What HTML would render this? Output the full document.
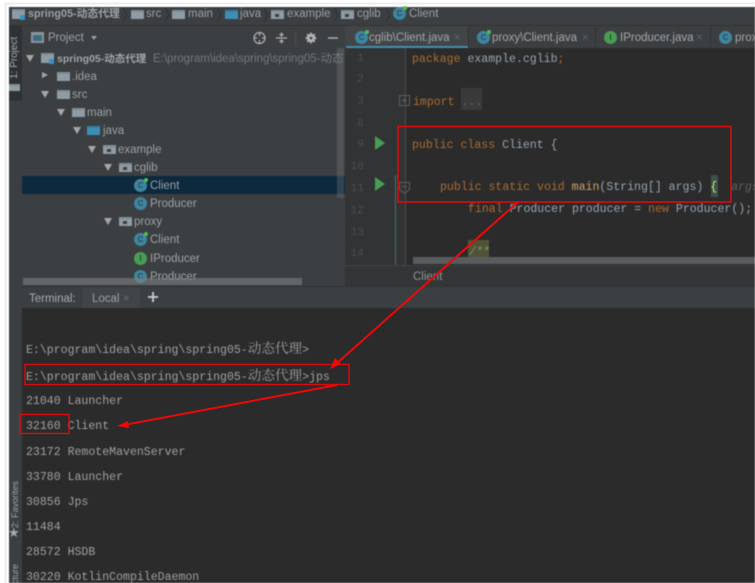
<!DOCTYPE html>
<html><head><meta charset="utf-8"><style>
html,body{margin:0;padding:0;background:#fff}
#a{position:relative;width:755px;height:583px;overflow:hidden;background:#fff}
#w{position:absolute;left:0;top:0;width:755px;height:583px;filter:blur(.6px)}
.b{position:absolute}
.t{position:absolute;white-space:pre;line-height:14px;height:14px;margin-top:1px;font-family:"Liberation Sans","Noto Sans CJK SC",sans-serif;font-size:11.5px;color:#9ba2a5}
.m{position:absolute;white-space:pre;line-height:14px;height:14px;margin-top:2px;font-family:"Liberation Mono","Noto Sans CJK SC",monospace;font-size:11.55px;color:#95a3b2}
.m u{text-decoration:none;font-size:13.6px;font-family:"Noto Serif CJK SC","Noto Sans CJK SC",serif;line-height:14px}
.n{position:absolute;white-space:pre;line-height:14px;margin-top:1px;font-family:"Liberation Mono",monospace;font-size:11px;color:#4b4f51;width:24px;left:344px}
.k{color:#a86b33}
.c{position:absolute;width:13px;height:13px;border-radius:50%;background:#3e86a0;color:#2f4a55;font:bold 8px/13px "Liberation Sans",sans-serif;text-align:center}
.g{background:#499c54;color:#2c4a30}
.d{position:absolute;width:4px;height:4px;background:#4fc14f;border-radius:50%;right:-1px;top:-1px}
.f{position:absolute;width:13px;height:9px;background:#8f9ca4;border-top:2px solid #808d95;box-sizing:border-box}
.fb{background:#3d8fb5;border-top-color:#3580a3}
.p:after{content:"";position:absolute;left:4px;top:2px;width:4px;height:3px;background:#3c3f41}
.ar{position:absolute;width:0;height:0;border-left:4px solid transparent;border-right:4px solid transparent;border-top:7px solid #a4a6a8}
.ar2{position:absolute;width:0;height:0;border-top:4px solid transparent;border-bottom:4px solid transparent;border-left:7px solid #a4a6a8}
.v{position:absolute;white-space:pre;font-family:"Liberation Sans",sans-serif;font-size:10px;line-height:12px;color:#9ba2a5;transform-origin:0 0;transform:rotate(-90deg)}
.term{color:#a0a0a0}
</style></head><body><div id="a"><div id="w">
<div class="b" style="left:5px;top:3px;width:750px;height:1px;background:#dcdcdc"></div>
<div class="b" style="left:5px;top:3px;width:1px;height:580px;background:#dcdcdc"></div>
<div class="b" style="left:9px;top:7px;width:746px;height:576px;background:#3c3f41"></div>

<!-- breadcrumb -->
<div class="f" style="left:12px;top:9px;width:13px;height:10px"></div><div class="b" style="left:20px;top:15px;width:5px;height:5px;background:#3592c4"></div>
<div class="t" style="left:28px;top:6px;font-weight:bold;font-size:10.8px">spring05-动态代理</div>
<svg class="b" style="left:0;top:7px" width="420" height="18" fill="none" stroke="#2e3032"><path d="M123 1l4 7-4 7M165 1l4 7-4 7M217 1l4 7-4 7M264 1l4 7-4 7M334 1l4 7-4 7M386 1l4 7-4 7"/></svg>
<div class="f" style="left:131px;top:10px"></div><div class="t" style="left:146px;top:6px">src</div>
<div class="f" style="left:172px;top:10px"></div><div class="t" style="left:188px;top:6px">main</div>
<div class="f fb" style="left:225px;top:10px"></div><div class="t" style="left:240px;top:6px">java</div>
<div class="f p" style="left:271px;top:10px"></div><div class="t" style="left:287px;top:6px">example</div>
<div class="f p" style="left:341px;top:10px"></div><div class="t" style="left:357px;top:6px">cglib</div>
<div class="c" style="left:393px;top:7px">C<i class="d"></i></div><div class="t" style="left:409px;top:6px">Client</div>
<div class="b" style="left:9px;top:25px;width:746px;height:1px;background:#323232"></div>

<!-- left strip -->
<div class="b" style="left:9px;top:26px;width:13px;height:75px;background:#2f3234"></div>
<div class="v" style="left:9px;top:79px;color:#a8abad;font-size:10px">1: Project</div>
<div class="f" style="left:9px;top:84px;width:11px;height:7px"></div>
<div class="v" style="left:9px;top:528px;font-size:9px">2: Favorites</div>
<div class="b" style="left:8px;top:527px;color:#a4abad;font:13px/14px 'DejaVu Sans',sans-serif">★</div>
<div class="v" style="left:9px;top:584px;font-size:9px">cture</div>

<!-- project panel -->
<div class="b" style="left:22px;top:26px;width:323px;height:22px;background:#3c3f41"></div>
<div class="b" style="left:31px;top:32px;width:13px;height:11px;background:#8a949a"></div>
<div class="b" style="left:33px;top:35px;width:9px;height:6px;background:#3f6a84"></div>
<div class="t" style="left:48px;top:30px;font-size:11.5px">Project</div>
<div class="ar" style="left:91px;top:36px;border-left-width:3.5px;border-right-width:3.5px;border-top-width:4px;border-top-color:#9a9fa2"></div>
<svg class="b" style="left:250px;top:28px" width="90" height="18" fill="none" stroke="#afb1b3" stroke-width="1.2">
<circle cx="9.5" cy="10" r="5.5"/><path d="M9.5 5v3M9.5 12v3M4 10h3M12 10h3"/>
<path d="M26 10h11M31.5 4.5v3M29.5 6l2 2 2-2M31.5 15.5v-3M29.5 14l2-2 2 2"/>
<path d="M45.5 3v15" stroke="#4a4d4f"/>
<circle cx="61" cy="10" r="3.2" stroke-width="2.4"/><path d="M61 4.5v11M55.5 10h11M57.1 6.1l7.800 7.800M64.900 6.100l-7.800 7.800" stroke-width="1.5"/><circle cx="61" cy="10" r="1.3" fill="#3c3f41" stroke="none"/>
<path d="M78 10h10" stroke-width="1.4"/>
</svg>

<div class="ar" style="left:26px;top:55px"></div>
<div class="f" style="left:41px;top:53px;width:13px;height:10px"></div><div class="b" style="left:49px;top:59px;width:5px;height:5px;background:#3592c4"></div>
<div class="t" style="left:57px;top:51px;font-weight:bold;font-size:10.5px;color:#a0a5a8">spring05-动态代理</div>
<div class="t" style="left:153px;top:51px;font-size:11.5px;color:#74787a;width:192px;overflow:hidden">E:\program\idea\spring\spring05-动态</div>

<div class="ar2" style="left:42px;top:72px;border-top-width:3.5px;border-bottom-width:3.5px;border-left-width:6px"></div>
<div class="f" style="left:57px;top:72px"></div><div class="t" style="left:72px;top:69px">.idea</div>
<div class="ar" style="left:41px;top:91px"></div>
<div class="f" style="left:57px;top:90px"></div><div class="t" style="left:72px;top:87px">src</div>
<div class="ar" style="left:57px;top:109px"></div>
<div class="f" style="left:72px;top:108px"></div><div class="t" style="left:87px;top:105px">main</div>
<div class="ar" style="left:73px;top:127px"></div>
<div class="f fb" style="left:87px;top:126px"></div><div class="t" style="left:103px;top:123px">java</div>
<div class="ar" style="left:88px;top:146px"></div>
<div class="f p" style="left:103px;top:145px"></div><div class="t" style="left:118px;top:142px">example</div>
<div class="ar" style="left:104px;top:164px"></div>
<div class="f p" style="left:119px;top:163px"></div><div class="t" style="left:134px;top:160px">cglib</div>

<div class="b" style="left:22px;top:176px;width:323px;height:18px;background:#0d293e"></div>
<div class="c" style="left:134px;top:179px">C<i class="d"></i></div><div class="t" style="left:150px;top:178px">Client</div>
<div class="c" style="left:134px;top:197px">C</div><div class="t" style="left:150px;top:196px">Producer</div>
<div class="ar" style="left:104px;top:218px"></div>
<div class="f p" style="left:119px;top:217px"></div><div class="t" style="left:134px;top:214px">proxy</div>
<div class="c" style="left:134px;top:233px">C<i class="d"></i></div><div class="t" style="left:150px;top:232px">Client</div>
<div class="c g" style="left:134px;top:252px">I</div><div class="t" style="left:150px;top:251px">IProducer</div>
<div class="c" style="left:134px;top:270px">C</div><div class="t" style="left:150px;top:269px">Producer</div>
<div class="b" style="left:337px;top:48px;width:7px;height:150px;background:rgba(125,128,130,.32)"></div>
<div class="b" style="left:23px;top:278px;width:279px;height:7px;background:rgba(125,128,130,.6)"></div>

<!-- tabs -->
<div class="b" style="left:345px;top:26px;width:410px;height:22px;background:#3c3f41"></div>
<div class="b" style="left:345px;top:26px;width:123px;height:20px;background:#414547"></div>
<div class="b" style="left:346px;top:46px;width:122px;height:2px;background:#3f8fae"></div>
<div class="c" style="left:355px;top:31px">C<i class="d"></i></div>
<div class="t" style="left:369px;top:30px;color:#a4a6a8">cglib\Client.java</div><div class="t" style="left:454px;top:30px;color:#5f6365">×</div>
<div class="b" style="left:468px;top:26px;width:1px;height:22px;background:#323232"></div>
<div class="c" style="left:477px;top:31px">C<i class="d"></i></div>
<div class="t" style="left:492px;top:30px;color:#a4a6a8">proxy\Client.java</div><div class="t" style="left:582px;top:30px;color:#5f6365">×</div>
<div class="b" style="left:595px;top:26px;width:1px;height:22px;background:#323232"></div>
<div class="c g" style="left:604px;top:31px">I</div>
<div class="t" style="left:620px;top:30px;color:#a4a6a8">IProducer.java</div><div class="t" style="left:696px;top:30px;color:#5f6365">×</div>
<div class="b" style="left:710px;top:26px;width:1px;height:22px;background:#323232"></div>
<div class="c" style="left:719px;top:31px">C</div>
<div class="t" style="left:735px;top:30px;color:#a4a6a8">prox</div>

<!-- editor -->
<div class="b" style="left:345px;top:48px;width:410px;height:217px;background:#2b2b2b"></div>
<div class="b" style="left:345px;top:48px;width:60px;height:217px;background:#313335"></div>
<div class="b" style="left:405px;top:48px;width:1px;height:217px;background:#4a4c4e"></div>
<div class="b" style="left:395px;top:175px;width:1px;height:90px;background:#4d6f5f"></div>
<div class="n" style="top:51px">  1</div><div class="n" style="top:72px">  2</div><div class="n" style="top:94px">  3</div><div class="n" style="top:116px">  8</div><div class="n" style="top:137px">  9</div><div class="n" style="top:159px"> 10</div><div class="n" style="top:181px"> 11</div><div class="n" style="top:203px"> 12</div><div class="n" style="top:225px"> 13</div><div class="n" style="top:246px"> 14</div>
<svg class="b" style="left:370px;top:130px" width="46" height="70" fill="#499c54"><path d="M5 6l10 7-10 7zM5 47l10 7-10 7z"/></svg>
<svg class="b" style="left:397px;top:94px" width="16" height="110" fill="none" stroke="#5c5f61"><path d="M2.5 1.500h10v10h-10zM5 6.500h5M7.500 4v5"/><path d="M2.500 88.500h10v7l-5 4-5-4zM5 92.500h5"/></svg>

<div class="m" style="left:412px;top:51px"><span class="k">package</span> example.cglib<span class="k">;</span></div>
<div class="b" style="left:461px;top:88px;width:21px;height:22px;background:#3a3a3a"></div>
<div class="m" style="left:413px;top:94px"><span class="k">import</span> <span style="color:#666">...</span></div>
<div class="m" style="left:412px;top:137px"><span class="k">public class</span> Client {</div>
<div class="b" style="left:711px;top:175px;width:7px;height:22px;background:#3b514d"></div>
<div class="m" style="left:440px;top:179px"><span class="k">public static void</span> <span style="color:#c9a362">main</span>(String[] args) <span style="color:#e8e85a">{</span>  <i style="color:#5f5f5f">args</i></div>
<div class="m" style="left:468px;top:201px"><span class="k">final</span> Producer producer = <span class="k">new</span> Producer();</div>
<div class="b" style="left:468px;top:240px;width:21px;height:21px;background:#525239"></div>
<div class="m" style="left:469px;top:244px;color:#6fa35c;font-style:italic">/**</div>
<div class="b" style="left:413px;top:257px;width:342px;height:7px;background:#595b5d"></div>
<div class="b" style="left:345px;top:265px;width:410px;height:21px;background:#333537;border-top:1px solid #404243;box-sizing:border-box"></div>
<div class="t" style="left:413px;top:269px;color:#909395">Client</div>

<!-- terminal bar -->
<div class="b" style="left:22px;top:286px;width:733px;height:22px;background:#3c3f41;border-top:1px solid #323232;box-sizing:border-box"></div>
<div class="b" style="left:82px;top:287px;width:58px;height:21px;background:#414547"></div>
<div class="t" style="left:29px;top:291px;color:#a8abad">Terminal:</div>
<div class="t" style="left:92px;top:291px">Local</div><div class="t" style="left:123px;top:291px;color:#6a6d6f">×</div>
<div class="b" style="left:148px;top:296px;width:10px;height:2px;background:#c0c3c5"></div><div class="b" style="left:152px;top:292px;width:2px;height:10px;background:#c0c3c5"></div>

<!-- terminal -->
<div class="b" style="left:22px;top:308px;width:733px;height:275px;background:#2b2b2b"></div>
<div class="m term" style="left:26px;top:338px">E:\program\idea\spring\spring05-<u>动态代理</u>&gt;</div>
<div class="m term" style="left:26px;top:365px">E:\program\idea\spring\spring05-<u>动态代理</u>&gt;jps</div>
<div class="m term" style="left:26px;top:393px">21040 Launcher</div>
<div class="m term" style="left:26px;top:418px">32160 Client</div>
<div class="m term" style="left:26px;top:444px">23172 RemoteMavenServer</div>
<div class="m term" style="left:26px;top:469px">33780 Launcher</div>
<div class="m term" style="left:26px;top:494px">30856 Jps</div>
<div class="m term" style="left:26px;top:519px">11484</div>
<div class="m term" style="left:26px;top:544px">28572 HSDB</div>
<div class="m term" style="left:26px;top:569px">30220 KotlinCompileDaemon</div>
</div>
<!-- annotations -->
<svg class="b" style="left:0;top:0;filter:blur(.3px)" width="755" height="583" fill="none" stroke="#d80c0c">
<rect x="398" y="126.5" width="333" height="75.5" stroke-width="1.6"/>
<rect x="25" y="364.5" width="324" height="20" stroke-width="1.4"/>
<rect x="20" y="414.5" width="49" height="19" stroke-width="1.4"/>
<path d="M518 202L336 364" stroke="#ee0808" stroke-width="2"/><path d="M330 369l5-11 6 6z" fill="#ee0808" stroke="none"/>
<path d="M337 385L124 425" stroke="#ee0808" stroke-width="2"/><path d="M117 426l11-5 1 7z" fill="#ee0808" stroke="none"/>
</svg>
</div></body></html>
